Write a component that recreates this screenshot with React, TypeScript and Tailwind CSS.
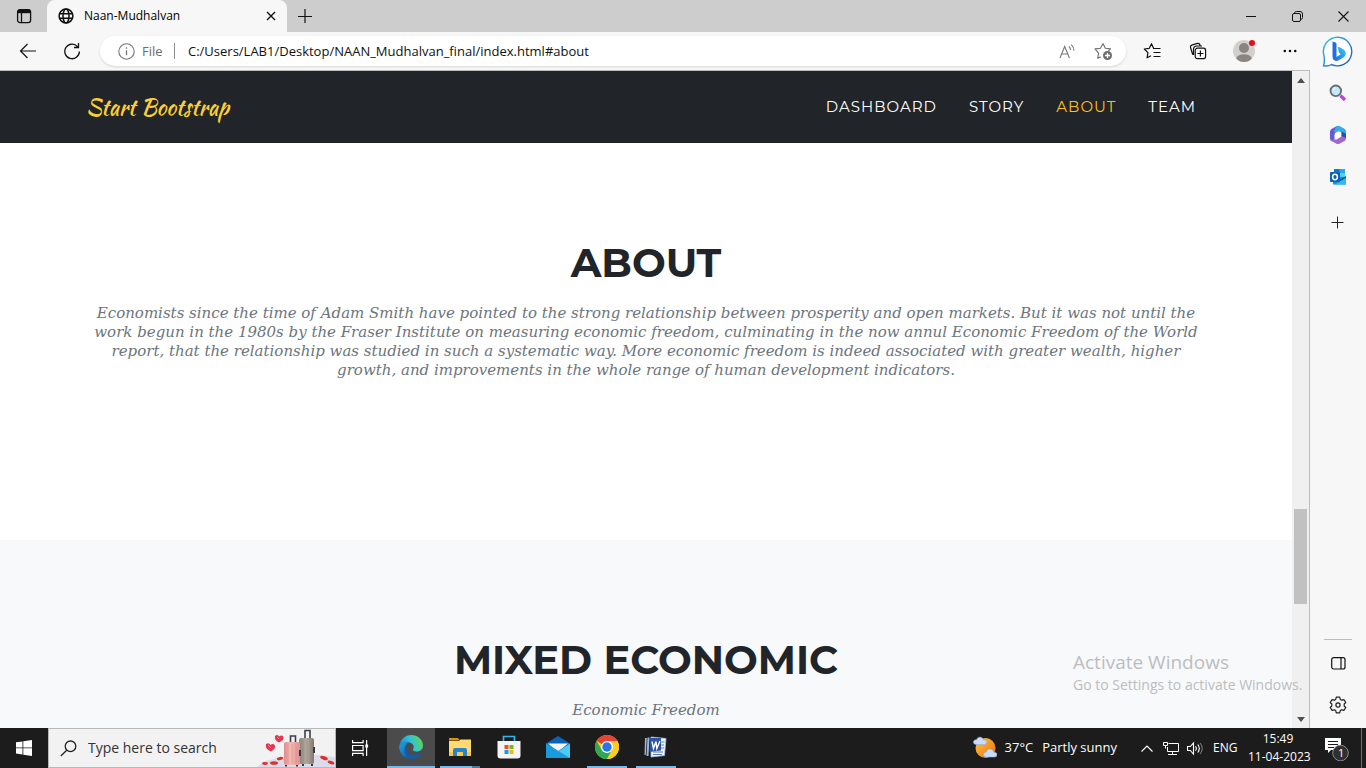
import React from "react";

const ui = "font-['Segoe_UI','Open_Sans',sans-serif]";
const display = "font-['Montserrat','Inter',sans-serif]";
const slab = "font-['Roboto_Slab','DejaVu_Serif',serif]";

type BoxProps = { label: string; className?: string; children: React.ReactNode };

function IconButton({ label, className = "", children }: BoxProps) {
  return (
    <button type="button" aria-label={label} className={`flex shrink-0 items-center justify-center ${className}`}>
      {children}
    </button>
  );
}

function TabStrip() {
  return (
    <header className="flex h-8 shrink-0 items-stretch bg-[#cdcdcd] text-black">
      <IconButton label="Tab actions" className="w-[47px]">
        <svg width="16" height="16" viewBox="0 0 16 16" fill="none" stroke="#111" strokeWidth="1.3">
          <rect x="1.6" y="1.6" width="13" height="13" rx="2.4" />
          <path d="M2 3.5h12" strokeWidth="3.4" />
          <path d="M5.5 5v9.5" />
        </svg>
      </IconButton>
      <div className="flex w-60 items-center rounded-t-lg bg-[#f7f7f7] pr-2 pl-[9px]">
        <svg width="20" height="20" viewBox="0 0 20 20" fill="none" stroke="#111" strokeWidth="1.5">
          <circle cx="10" cy="10" r="6.9" />
          <ellipse cx="10" cy="10" rx="3" ry="6.9" />
          <path d="M3.5 7.7h13M3.5 12.3h13" />
        </svg>
        <span className="ml-2 flex-1 text-xs">Naan-Mudhalvan</span>
        <IconButton label="Close tab" className="size-4">
          <svg width="10" height="10" viewBox="0 0 10 10" stroke="#111" strokeWidth="1.4">
            <path d="M1 1l8 8M9 1L1 9" />
          </svg>
        </IconButton>
      </div>
      <IconButton label="New tab" className="w-9">
        <svg width="14" height="14" viewBox="0 0 14 14" stroke="#111" strokeWidth="1.2">
          <path d="M7 0v14M0 7.5h14" />
        </svg>
      </IconButton>
      <div className="flex-1" />
      <IconButton label="Minimize" className="w-[46px]">
        <svg width="10" height="10" viewBox="0 0 10 10" stroke="#111"><path d="M0 5.500h10" /></svg>
      </IconButton>
      <IconButton label="Restore" className="w-[46px]">
        <svg width="11" height="11" viewBox="0 0 11 11" fill="none" stroke="#111">
          <rect x="0.5" y="2.5" width="8" height="8" rx="1.5" />
          <path d="M2.6 2V1.8Q3 .5 4.5 .5H8q2.500 0 2.500 2.500V6.600q0 1.300-1.300 1.800" />
        </svg>
      </IconButton>
      <IconButton label="Close window" className="w-[46px]">
        <svg width="11" height="11" viewBox="0 0 11 11" stroke="#111" strokeWidth="1.1"><path d="M.5 .5l10 10M10.500 .5l-10 10" /></svg>
      </IconButton>
    </header>
  );
}

function Toolbar() {
  return (
    <div className="flex h-[39px] shrink-0 items-center border-b border-[#bdbdbd] bg-[#f7f7f7] pl-1.5">
      <IconButton label="Back" className="w-11">
        <svg width="18" height="18" viewBox="0 0 18 18" fill="none" stroke="#111" strokeWidth="1.2">
          <path d="M17 9H1.500M8.500 2L1.500 9l7 7" />
        </svg>
      </IconButton>
      <IconButton label="Refresh" className="w-11">
        <svg width="18" height="18" viewBox="0 0 18 18" fill="none" stroke="#111" strokeWidth="1.3">
          <path d="M14.600 4.600A7.300 7.300 0 1 0 16.400 9.500M15.500 1v4.500H11" />
        </svg>
      </IconButton>
      <div className="ml-1.5 flex h-[30px] flex-1 items-center rounded-full bg-white pr-3 pl-[18px] text-sm shadow-sm">
        <svg width="17" height="17" viewBox="0 0 17 17" fill="none" stroke="#757575" strokeWidth="1.100">
          <circle cx="8.500" cy="8.500" r="7.700" />
          <path d="M8.500 7.300v5M8.500 4.300v1.500" strokeWidth="1.300" />
        </svg>
        <span className="ml-[7px] w-[21px] text-[13px] text-[#6b6b6b]">File</span>
        <span className="mr-[13px] ml-[11px] h-4 w-px bg-[#8a8a8a]" />
        <input
          aria-label="Address"
          defaultValue="C:/Users/LAB1/Desktop/NAAN_Mudhalvan_final/index.html#about"
          className="min-w-0 flex-1 bg-transparent text-[13px] text-[#111] outline-none"
        />
        <IconButton label="Read aloud" className="w-[22px]">
          <svg width="17" height="15" viewBox="0 0 17 15" fill="none" stroke="#777" strokeWidth="1.100">
            <path d="M1 14L5.700 2.500 10.400 14M2.600 10h6.200M10 2.500q1.500 1.500 1.500 3.500M12.200 .7q2.800 2.600 2.800 6" />
          </svg>
        </IconButton>
        <IconButton label="Add to favorites" className="ml-3.5 w-[22px]">
          <svg width="19" height="19" viewBox="0 0 19 19" fill="none" stroke="#6f6f6f" strokeWidth="1.100" strokeLinejoin="round">
            <path d="M9 1.500l2.300 4.700 5.200.7-3.800 3.700M6.800 14.800l-3.100 1.500.9-5.200L1 6.900l5.500-.7L9 1.500" />
            <circle cx="13.500" cy="13.500" r="4.500" fill="#6f6f6f" stroke="none" />
            <path d="M13.500 11v5M11 13.500h5" stroke="#fff" strokeWidth="1.300" />
          </svg>
        </IconButton>
      </div>
      <div className="flex -mr-[3px] pl-[3px]">
        <IconButton label="Favorites" className="w-[46px]">
          <svg width="18" height="18" viewBox="0 0 18 18" fill="none" stroke="#111" strokeWidth="1.200" strokeLinejoin="round">
            <path d="M10.700 6.500L8.500 1.700 6.300 6.300 1.300 7l3.600 3.700-.8 5.100 3.900-2.100M10 6.500h7.500M10.500 10.500h7M10.500 14.500h7" />
          </svg>
        </IconButton>
        <IconButton label="Collections" className="w-[46px]">
          <svg width="18" height="18" viewBox="0 0 18 18" fill="none" stroke="#111" strokeWidth="1.200">
            <rect x="6.200" y="6.200" width="10.400" height="10.400" rx="2.200" />
            <path d="M11.400 8.500v6M8.400 11.500h6M3.800 12.800L1.500 5.500q-.5-1.700 1.200-2.400L8.500 1.400q1.500-.3 2.200 1l.5 1.100M4.500 13V7.500Q4.500 4 8 4h5" />
          </svg>
        </IconButton>
        <IconButton label="Profile" className="w-[46px]">
          <svg width="24" height="24" viewBox="0 0 24 24">
            <circle cx="12" cy="12" r="11" fill="#d2d0ce" />
            <circle cx="12" cy="9" r="5" fill="#8a8482" />
            <path d="M4.200 19.500Q6 15.300 12 15.300t7.800 4.200Q16.500 23 12 23T4.200 19.500z" fill="#8a8482" />
            <circle cx="20" cy="4" r="3" fill="#e80b18" />
          </svg>
        </IconButton>
        <IconButton label="Settings and more" className="w-[46px]">
          <svg width="14" height="4" viewBox="0 0 14 4" fill="#111"><circle cx="1.800" cy="2" r="1.300" /><circle cx="7" cy="2" r="1.300" /><circle cx="12.200" cy="2" r="1.300" /></svg>
        </IconButton>
      </div>
    </div>
  );
}

function Sidebar() {
  return (
    <aside className="flex w-14 shrink-0 flex-col items-center bg-[#f7f7f7]">
      <IconButton label="Bing chat" className="mt-1 size-8">
        <svg width="32" height="32" viewBox="0 0 32 32">
          <defs>
            <linearGradient id="bingRing" x1="0" y1="0" x2="1" y2="1"><stop stopColor="#35c5ee" /><stop offset="1" stopColor="#1b4fc4" /></linearGradient>
            <linearGradient id="bingB" x1="0" y1="1" x2="1" y2="0"><stop stopColor="#1c62e0" /><stop offset=".5" stopColor="#249af0" /><stop offset="1" stopColor="#36d0f0" /></linearGradient>
          </defs>
          <path d="M16 1.200a14.300 14.300 0 1 1-6.500 27.300Q6 30.500 1.500 29.700 2.800 27 2.100 20A14.300 14.300 0 0 1 16 1.200z" fill="#fff" stroke="url(#bingRing)" strokeWidth="1.400" />
          <path d="M10.500 5.500l3 1q1 .4 1 1.500V20l-1 3.500q-3-1-3-4z" fill="#1f6ee8" />
          <path d="M16 12q-.6-1.500 1-1l3.500 1.800q3.500 2 3.200 5.200-.3 2.400-2.400 3.600l-4.600 2.700q-2.400 1.300-4.500 0-1.700-1.200-1.700-3.800 1.500 1.500 4 .3l4.300-2.600-1.800-1.400z" fill="url(#bingB)" />
        </svg>
      </IconButton>
      <IconButton label="Search" className="mt-[15px] size-5">
        <svg width="18" height="18" viewBox="0 0 18 18" fill="none">
          <path d="M11.500 11.500l4.500 4.500" stroke="#bd3ff0" strokeWidth="3.200" />
          <circle cx="6.800" cy="6.800" r="5.300" fill="#c5e7f7" stroke="#656b70" strokeWidth="1.800" />
          <path d="M4 6q.5-2 2.500-2.300" stroke="#fff" />
        </svg>
      </IconButton>
      <IconButton label="Microsoft 365" className="mt-[22px] size-5">
        <svg width="18" height="20" viewBox="0 0 18 20">
          <path d="M7 1.500Q9 .5 11 1.500L15.500 4q1.500 1 1.500 2.500V12l-4.500-2.500V7L6 5z" fill="#2d8fdd" />
          <path d="M7 1.500L2.500 4Q1 5 1 6.500v7Q1 15 2.500 16l3 .5V10L10 5 7.500 3z" fill="#665bd0" />
          <path d="M1.300 14.500q.4 1 1.200 1.500L7 18.500q2 1 4 0l4.500-2.500q1.500-1 1.500-2.500V12l-4.500-2.500L8 14.500z" fill="#a069d0" />
          <path d="M7 1.500Q9 .5 11 1.500L15.500 4q1.500 1 1.500 2.500V9l-5.500-3L6 7.500 5 6z" fill="#36ace9" />
          <path d="M12.500 6.500L17 9v4l-4.500-2z" fill="#2452a8" />
          <path d="M9 6.500l3.200 1.800v3.400L9 13.500l-3.200-1.800V8.300z" fill="#fff" />
        </svg>
      </IconButton>
      <IconButton label="Outlook" className="mt-[22px] size-5">
        <svg width="18" height="18" viewBox="0 0 18 18">
          <path d="M5 1h11v8H5z" fill="#28a8ea" />
          <path d="M5 1h5.500v4H5z" fill="#1478c8" /><path d="M10.500 5H16v4h-5.500z" fill="#50d0f2" />
          <path d="M4 9h13v7.500H4z" fill="#1490df" /><path d="M17 8v8l-7-4z" fill="#0b559c" /><path d="M6 16.500L17 9.800v6.700z" fill="#35b8f1" />
          <rect x="1" y="4" width="10" height="10" rx="1" fill="#0862b5" />
          <ellipse cx="6" cy="9" rx="2.400" ry="2.700" fill="none" stroke="#fff" strokeWidth="1.500" />
        </svg>
      </IconButton>
      <IconButton label="Add app" className="mt-[26px] size-5">
        <svg width="14" height="14" viewBox="0 0 14 14" stroke="#222"><path d="M6.500 .5v12M.5 6.500h12" /></svg>
      </IconButton>
      <div className="flex-1" />
      <div className="h-px w-7 bg-[#bdbdbd]" />
      <IconButton label="Hide sidebar" className="mt-[13px] size-5">
        <svg width="15" height="13" viewBox="0 0 15 13" fill="none" stroke="#111" strokeWidth="1.200"><rect x=".7" y=".7" width="13.300" height="11.300" rx="2" /><path d="M10 1v11" /></svg>
      </IconButton>
      <IconButton label="Settings" className="mt-5 mb-[11px] size-6">
        <svg width="18" height="18" viewBox="0 0 18 18" fill="none" stroke="#222" strokeWidth="1.200" strokeLinejoin="round">
          <path d="M7.300 1.200h3.400l.6 2.200 1.400.8 2.200-.6 1.900 2.900L15.200 8v2l1.600 1.500-1.900 2.900-2.200-.6-1.400.8-.6 2.200H7.300l-.6-2.200-1.400-.8-2.200.6-1.900-2.900L2.800 10V8L1.200 6.500l1.900-2.900 2.200.6 1.400-.8z" />
          <circle cx="9" cy="9" r="2.100" />
        </svg>
      </IconButton>
    </aside>
  );
}

function SiteNav() {
  return (
    <nav className="flex h-[72px] shrink-0 items-center justify-between bg-[#212529] pr-24 pl-[86px]">
      <a href="#top" className="font-['Kaushan_Script','Liberation_Serif',serif] text-[22px] text-[#fbd034]">
        Start Bootstrap
      </a>
      <ul className={`flex gap-8 text-[15px] tracking-[1px] text-white uppercase ${display}`}>
        <li><a href="#dashboard">Dashboard</a></li>
        <li><a href="#story">Story</a></li>
        <li><a href="#about" className="text-[#ffc016]">About</a></li>
        <li><a href="#team">Team</a></li>
      </ul>
    </nav>
  );
}

function SitePage() {
  const title = `text-[40px] leading-[48px] font-bold text-[#212529] uppercase ${display}`;
  const sub = `mt-[17px] text-[15px] leading-[19px] text-[#6c757d] italic ${slab}`;
  return (
    <div className="flex min-w-0 flex-1 flex-col overflow-hidden bg-white">
      <SiteNav />
      <main className="flex-1 overflow-hidden text-center">
        <section id="about" className="h-[397px] px-[88px] pt-24">
          <h2 className={title}>About</h2>
          <p className={sub}>
            Economists since the time of Adam Smith have pointed to the strong relationship between prosperity and open markets. But it was not until the
            <br />
            work begun in the 1980s by the Fraser Institute on measuring economic freedom, culminating in the now annul Economic Freedom of the World
            <br />
            report, that the relationship was studied in such a systematic way. More economic freedom is indeed associated with greater wealth, higher
            <br />
            growth, and improvements in the whole range of human development indicators.
          </p>
        </section>
        <section className="h-full bg-[#f8f9fb] px-[88px] pt-24">
          <h2 className={title}>Mixed Economic</h2>
          <p className={sub}>Economic Freedom</p>
        </section>
      </main>
    </div>
  );
}

function ScrollRail() {
  return (
    <div className="flex w-[18px] shrink-0 flex-col items-center border-r border-[#bdbdbd] bg-[#f0f0f0] pt-[7px] pb-1.5">
      <svg width="8" height="5" viewBox="0 0 8 5" fill="#505050"><path d="M4 0l4 5H0z" /></svg>
      <div className="flex-[425]" />
      <div className="w-[13px] flex-[95] bg-[#c1c1c1]" />
      <div className="flex-[113]" />
      <svg width="8" height="5" viewBox="0 0 8 5" fill="#505050"><path d="M4 5l4-5H0z" /></svg>
    </div>
  );
}

function TravelArt() {
  return (
    <svg width="78" height="38" viewBox="0 0 78 38">
      <defs>
        <linearGradient id="pinkCase" x1="0" x2="1"><stop stopColor="#dc8b8b" /><stop offset=".4" stopColor="#f5b9b4" /><stop offset="1" stopColor="#df918f" /></linearGradient>
        <linearGradient id="tanCase" x1="0" x2="1"><stop stopColor="#8e8378" /><stop offset=".5" stopColor="#b5aaa0" /><stop offset="1" stopColor="#82786e" /></linearGradient>
      </defs>
      <path d="M0 38l8-6 22-5 32-1 16 2v10z" fill="#dcdbea" />
      <path d="M48 10V1.500h5V10" fill="none" stroke="#39404c" strokeWidth="1.600" />
      <path d="M33.500 14V7h5v7" fill="none" stroke="#39404c" strokeWidth="1.600" />
      <rect x="42" y="9" width="15" height="26" rx="2" fill="url(#tanCase)" />
      <path d="M46 11v22M50 11v22M54 11v21" stroke="#958b81" strokeWidth=".6" />
      <rect x="27" y="13" width="16" height="23" rx="2" fill="url(#pinkCase)" />
      <path d="M31 15v19M35 15v19M39 15v19" stroke="#d98d8c" strokeWidth=".6" />
      <path d="M43 21v6M57 18v6" stroke="#343944" strokeWidth="2" />
      <path d="M29 36v1.500M40 36v1.500M46 35v2M55 35v2" stroke="#343944" strokeWidth="2" />
      <path d="M9 15q3-2 4.500 1 2.500-2 4.500.5 1 3-4 6Q7.500 19.500 9 15zM18 7q2.500-2 4 .5 3-2 4.500.5.800 3-4.500 5.500Q17 11 18 7z" fill="#e63750" />
      <path d="M11 16l3 3M20 8l2 2" stroke="#ff8790" />
      <g fill="#dc3029"><ellipse cx="8" cy="34.500" rx="3" ry="1.400" /><ellipse cx="17" cy="34" rx="4" ry="1.800" /><ellipse cx="23" cy="29.500" rx="3.200" ry="1.500" transform="rotate(-15 23 29.500)" /><ellipse cx="67" cy="29" rx="4" ry="1.800" transform="rotate(20 67 29)" /><ellipse cx="74" cy="33.500" rx="3.500" ry="1.500" transform="rotate(20 74 33.500)" /></g>
    </svg>
  );
}

type AppProps = { label: string; active?: boolean; running?: boolean; stacked?: boolean; children: React.ReactNode };

function TaskApp({ label, active, running, stacked, children }: AppProps) {
  return (
    <button type="button" aria-label={label} className={`flex w-12 flex-col items-center ${active ? "bg-[#4b4b4b]" : ""}`}>
      <span className="flex flex-1 items-center">{children}</span>
      <span className={`flex h-0.5 ${active ? "w-12" : "w-10"} ${active || running ? "bg-[#76b9ed]" : ""}`}>
        {stacked && <span className="ml-auto w-2 bg-[#50779a]" />}
      </span>
    </button>
  );
}

function Taskbar() {
  return (
    <footer className="flex h-10 shrink-0 items-stretch bg-[#1c1c1c] text-white">
      <IconButton label="Start" className="w-12">
        <svg width="16" height="16" viewBox="0 0 16 16" fill="#fff"><path d="M0 2.300L6.500 1.400v6.100H0zM7.300 1.300L16 0v7.500H7.300zM0 8.300h6.500v6.200L0 13.600zM7.300 8.300H16V16l-8.700-1.300z" /></svg>
      </IconButton>
      <div className="flex w-72 items-center border border-[#b8b8b8] bg-[#f2f2f2] pl-[11px]">
        <svg width="17" height="17" viewBox="0 0 17 17" fill="none" stroke="#222" strokeWidth="1.300"><circle cx="10.500" cy="6.300" r="5.300" /><path d="M6.700 10.200L.8 16" /></svg>
        <input aria-label="Type here to search" defaultValue="Type here to search" className="ml-[11px] min-w-0 flex-1 bg-transparent text-sm text-[#333] outline-none" />
        <TravelArt />
      </div>
      <IconButton label="Task view" className="mr-[3px] w-12">
        <svg width="17" height="16" viewBox="0 0 17 16" fill="none" stroke="#fff" strokeWidth="1.200"><path d="M.6 0v2.700h10.500V0M.6 16v-2.700h10.500V16M14.600 0v16" /><path d="M.6 5.500h10.500v5.200H.6z" /><path d="M13.300 4.500h2.800v3h-2.800z" fill="#fff" stroke="none" /></svg>
      </IconButton>
      <div className="flex gap-px">
        <TaskApp label="Microsoft Edge" active>
          <svg width="24" height="24" viewBox="0 0 24 24">
            <defs>
              <linearGradient id="edgeTop" x1="0" y1=".6" x2="1" y2=".3"><stop stopColor="#1686d9" /><stop offset=".5" stopColor="#31c1d7" /><stop offset="1" stopColor="#62d84d" /></linearGradient>
              <linearGradient id="edgeSide" x1="0" y1="0" x2="1" y2="1"><stop stopColor="#1ca5e2" /><stop offset="1" stopColor="#104a9d" /></linearGradient>
            </defs>
            <path d="M.3 10.500A12 12 0 0 1 12 0c7 0 12 5 12 10.500 0 3.500-2.500 6-6 6-3 0-4.700-1.200-4-2.200 1.500-2 .8-5.800-3.500-6.800C6 6.400 1.500 8.500.3 10.500z" fill="url(#edgeTop)" />
            <path d="M.2 11C2 7.500 6.500 5.800 10 7.200 6.500 8.500 5.200 13 6.500 17c1 3.200 3.500 5.700 7.500 6.700A12 12 0 0 1 .2 11z" fill="url(#edgeSide)" />
            <path d="M8.800 9.300C6.500 12.300 7 20 14.500 20c3 0 5.500-1 7.300-2.400.7-.5 1 .1.700.7C20 22.500 16 24 13 23.800 5.300 22.500 3 13 8.800 9.300z" fill="#115ba8" />
          </svg>
        </TaskApp>
        <TaskApp label="File Explorer" running stacked>
          <svg width="22" height="20" viewBox="0 0 22 20"><path d="M0 1h9l2 2.500H0z" fill="#d8930a" /><path d="M0 4h10l1.500-1.500H22V19H0z" fill="#ffda70" /><path d="M0 15h22v4H0z" fill="#fbc64c" /><path d="M4 19v-6q0-2 2-2h10q2 0 2 2v6h-4v-4H8v4z" fill="#2585cc" /></svg>
        </TaskApp>
        <TaskApp label="Microsoft Store">
          <svg width="24" height="24" viewBox="0 0 24 24"><path d="M6.500 6V1.500h11V6" fill="none" stroke="#34b5e5" strokeWidth="1.700" /><path d="M.5 6h23v14.500q0 3-3 3h-17q-3 0-3-3z" fill="#f4f4f4" /><path d="M7.500 10H11.500v4h-4z" fill="#e9532b" /><path d="M12.500 10h4v4h-4z" fill="#7cb51b" /><path d="M7.500 15h4v4h-4z" fill="#159eda" /><path d="M12.500 15h4v4h-4z" fill="#f5b51b" /></svg>
        </TaskApp>
        <TaskApp label="Mail">
          <svg width="24" height="24" viewBox="0 0 24 24"><path d="M0 8.500L12 1l12 7.500v5H0z" fill="#0864b4" /><path d="M2 8.500h20L12 17z" fill="#f5f5f5" /><path d="M0 8.500L12 16l12-7.500V23H0z" fill="#24aeea" /><path d="M24 8.500V23H4z" fill="#49cbf4" /><path d="M0 8.500L24 23H0z" fill="#189bdd" /></svg>
        </TaskApp>
        <TaskApp label="Google Chrome" running>
          <svg width="24" height="24" viewBox="0 0 24 24"><circle cx="12" cy="12" r="12" fill="#fbcd21" /><path d="M12 12L1.600 6A12 12 0 0 1 22.400 6H12z" fill="#e44335" /><path d="M1.600 6A12 12 0 0 0 12 24l5.200-9L12 12l-5.200 3z" fill="#30a853" /><path d="M22.400 6A12 12 0 0 1 12 24l5.200-9L16 6z" fill="#fbcd21" /><circle cx="12" cy="12" r="6" fill="#fff" /><circle cx="12" cy="12" r="4.700" fill="#2875e8" /></svg>
        </TaskApp>
        <TaskApp label="Microsoft Word" running>
          <svg width="24" height="24" viewBox="0 0 24 24"><path d="M7 2l15 1.500-1.500 17L7 22z" fill="#f1f5fc" stroke="#a9bde2" strokeWidth=".8" /><path d="M15 7h5.500M15 10h5M15 13h5M9 17h10M9 19.500h9" stroke="#5a7bba" /><path d="M1 3h1.800L1.800 20H.5zM3.500 2.500h2l-1 18.500h-2z" fill="#9db5de" /><path d="M6 3h11v12.500L5.500 17z" fill="#2c55a4" /><path d="M8 6.500l1.500 7 2.500-7 .8 7L16 6" fill="none" stroke="#fff" strokeWidth="1.400" /></svg>
        </TaskApp>
      </div>
      <div className="flex-1" />
      <button type="button" className="flex items-center text-[13px]">
        <svg width="24" height="24" viewBox="0 0 24 24"><defs><linearGradient id="sun" x1="0" y1="0" x2="1" y2="1"><stop stopColor="#ffc43b" /><stop offset="1" stopColor="#ed6f12" /></linearGradient></defs><circle cx="12.500" cy="12" r="10" fill="url(#sun)" /><path d="M3 8.500Q0 8 .5 5.500 1 3.500 3.500 3.800 4.500.5 8 1.300q2 .5 2.300 2.500Q14 4 13.700 6.500q-.3 2-2.500 2zM13 21q-3-.3-2.500-3 .5-2 2.800-1.800 1-3.700 4.500-3 2.400.5 2.800 3 3.400-.2 3.400 2.600Q24 21 21.500 21z" fill="#c9ddfa" stroke="#8cb0e6" strokeWidth=".6" /></svg>
        <span className="ml-2">37°C</span>
        <span className="ml-[9px]">Partly sunny</span>
      </button>
      <div className="ml-6 flex items-center">
        <IconButton label="Show hidden icons" className="w-3">
          <svg width="12" height="7" viewBox="0 0 12 7" fill="none" stroke="#fff" strokeWidth="1.200"><path d="M.5 6.500L6 1l5.500 5.500" /></svg>
        </IconButton>
        <IconButton label="Network" className="ml-2.5">
          <svg width="16" height="15" viewBox="0 0 16 15" fill="none" stroke="#fff"><path d="M5.500 2.500h10v8h-11V6M9.500 10.500v3M5 13.500h9M.5 1.500h4v3h-4zM2.500 4.500v3" /></svg>
        </IconButton>
        <IconButton label="Volume" className="ml-2">
          <svg width="17" height="15" viewBox="0 0 17 15" fill="none" stroke="#fff" strokeWidth="1.100"><path d="M.5 5.500h2.800L6.500 2v11L3.300 9.500H.5zM8.500 5.200q1.600 2.300 0 4.600M10.800 3.500q3 4 0 8" /><path d="M13.200 2q4 5.500 0 11" stroke="#777" /></svg>
        </IconButton>
        <span className="ml-[9px] w-6 text-xs">ENG</span>
      </div>
      <div className="ml-[11px] flex w-[60px] flex-col justify-center text-center text-xs leading-[18px] whitespace-nowrap">
        <span>15:49</span>
        <span>11-04-2023</span>
      </div>
      <IconButton label="1 notification" className="mr-[11px] ml-4">
        <span className="relative">
          <svg width="26" height="26" viewBox="0 0 26 26"><path d="M1 3h16v12H7l-3 3v-3H1z" fill="#fff" /><path d="M4 6.500h10M4 9.500h10M4 12.500h6" stroke="#1c1c1c" /><circle cx="16.500" cy="18" r="7.800" fill="#303030" stroke="#888" /></svg>
          <span className="absolute top-2.5 left-3.5 text-[11px] leading-4">1</span>
        </span>
      </IconButton>
      <div className="mr-1 w-px bg-[#6c6c6c]" />
    </footer>
  );
}

export default function App() {
  return (
    <div className={`flex h-screen flex-col overflow-hidden bg-white ${ui}`}>
      <TabStrip />
      <div className="relative flex min-h-0 flex-1">
        <div className="flex min-w-0 flex-1 flex-col">
          <Toolbar />
          <div className="flex min-h-0 flex-1">
            <SitePage />
            <ScrollRail />
          </div>
        </div>
        <Sidebar />
        <div className="pointer-events-none absolute right-14 bottom-8 w-[237px] whitespace-nowrap text-[#bcbdbe]">
          <p className="text-[19px] leading-6">Activate Windows</p>
          <p className="text-[14px] leading-[22px]">Go to Settings to activate Windows.</p>
        </div>
      </div>
      <Taskbar />
    </div>
  );
}
